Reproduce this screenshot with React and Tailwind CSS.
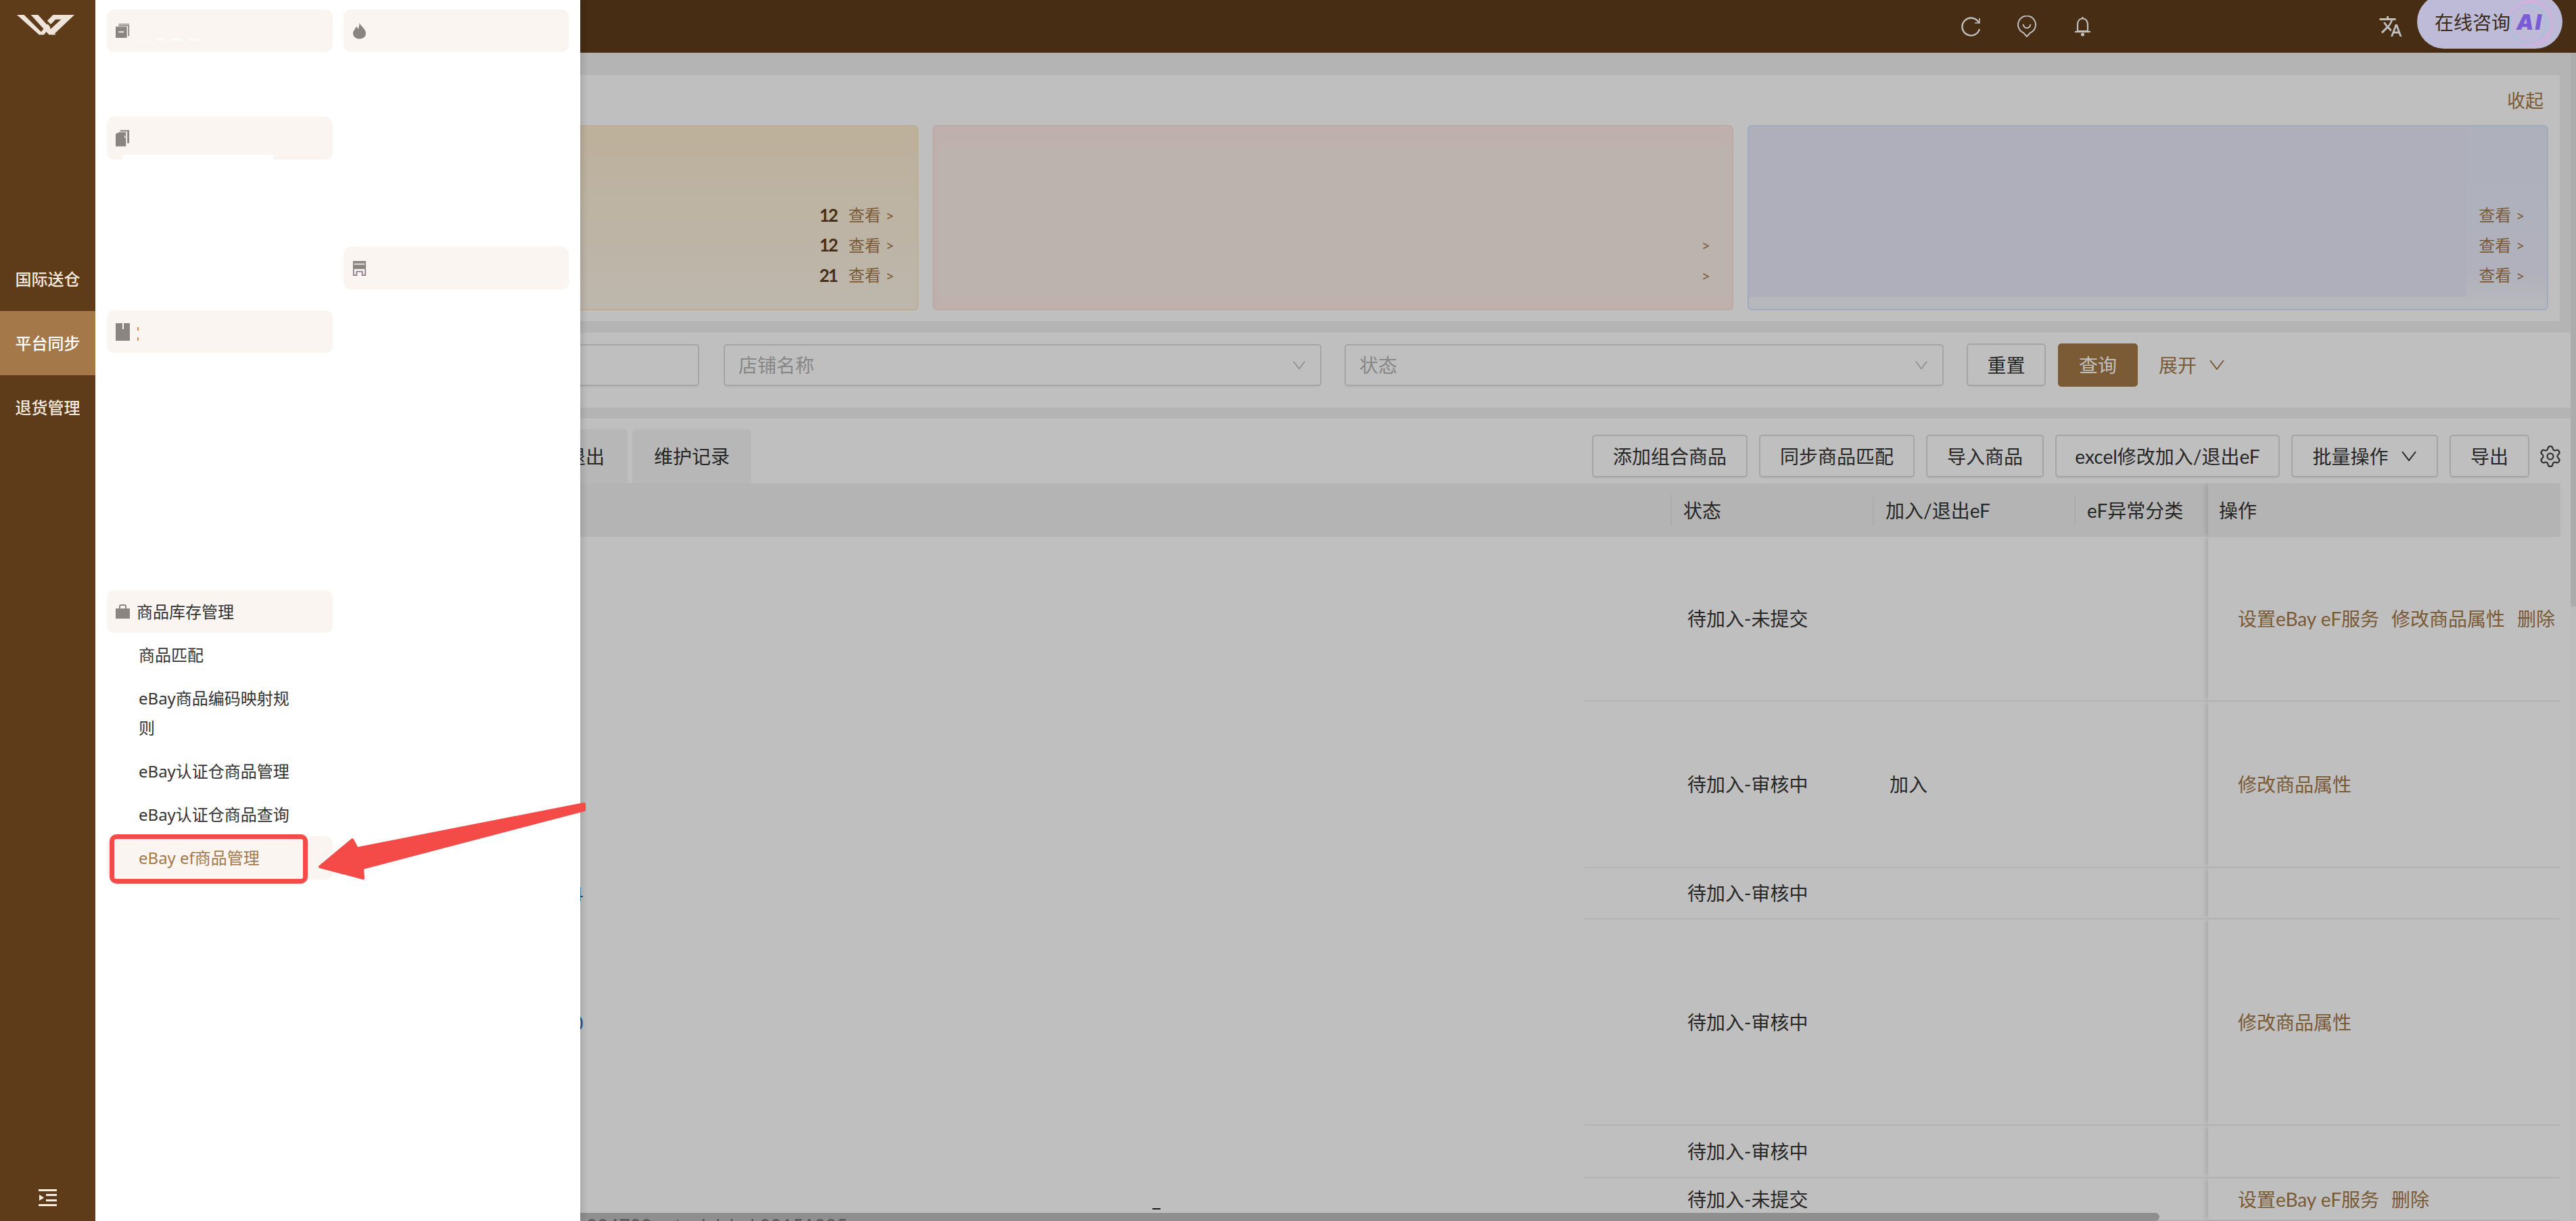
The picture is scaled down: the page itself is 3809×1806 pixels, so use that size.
import React from "react";
import { MdTranslate } from "react-icons/md";
import { Settings } from "lucide-react";

const Chevron = ({ className = "w-[24px] h-[15px]" }) => (
  <svg viewBox="0 0 24 15" className={className} fill="none" stroke="currentColor" strokeWidth="2">
    <path d="M2 1 L12 14 L22 1" />
  </svg>
);

const Logo = () => (
  <svg viewBox="0 0 315 150" className="w-[105px] h-[50px]" fill="#efe4da">
    <polygon points="30,30 62,30 150,118 128,118" />
    <polygon points="92,30 124,30 203,118 172,118" />
    <polygon points="128,118 166,70 178,84 150,118" />
    <path fillRule="evenodd" d="M190 30 H285 L190 120 L172 100 L226 50 H202 L180 72 L165 56 Z" />
  </svg>
);

const IconBook = () => (
  <svg viewBox="0 0 24 24" className="w-[23px] h-[23px]" fill="#8a8580">
    <path d="M0 5h19v19H0z" />
    <path d="M5 2h18v19h-2V4H5z" />
    <path d="M5 0h18v1.2H5z" />
    <rect x="5" y="13" width="9" height="2" fill="#faf5f1" />
  </svg>
);
const IconFlame = () => (
  <svg viewBox="0 0 22 25" className="w-[22px] h-[25px]" fill="#8a8580">
    <path d="M11 0c1 5 10 9 10 17a10 8 0 0 1-20 0C1 12 5 10 6 6c2 1 2 3 3 4 1-3 2-6 2-10z" />
  </svg>
);
const IconDocs = () => (
  <svg viewBox="0 0 22 25" className="w-[21px] h-[25px]" fill="#8a8580">
    <path d="M0 6l5-3h11v22H0z" />
    <path d="M7 0h14v20h-3V2H7z" />
    <path d="M13 7l3 5-2 0z" fill="#faf5f1" />
  </svg>
);
const IconStore = () => (
  <svg viewBox="0 0 23 24" className="w-[23px] h-[24px]">
    <path d="M1 0h21v13H1z" fill="#8a8580" />
    <rect x="3" y="4" width="17" height="2" fill="#efeae6" />
    <path d="M2 13v10h5v-6h9v6h5V13" fill="none" stroke="#8a7a90" strokeWidth="2" />
  </svg>
);
const IconNote = () => (
  <svg viewBox="0 0 21 26" className="w-[21px] h-[26px]">
    <path d="M0 0h21v26H0z" fill="#8a8580" />
    <rect x="10" y="0" width="2" height="9" fill="#faf5f1" />
  </svg>
);
const IconBag = () => (
  <svg viewBox="0 0 21 21" className="w-[21px] h-[21px]">
    <path d="M0 6h21v15H0z" fill="#8a8580" />
    <path d="M6 7V3a2 2 0 0 1 2-2h5a2 2 0 0 1 2 2v4" fill="none" stroke="#8a8580" strokeWidth="2" />
  </svg>
);

const MenuCard = ({ icon, text, children, className = "" }) => (
  <div className={`relative flex h-[63px] items-center gap-[10px] rounded-[10px] bg-[#faf5f1] pl-[13px] text-[24px] text-[#333333] ${className}`}>
    <span className="flex w-[21px] justify-center">{icon}</span>
    {text && <span>{text}</span>}
    {children}
  </div>
);

const SubItem = ({ children }) => (
  <div className="py-[10px] pl-[47px] pr-[48px] text-[24px] leading-[44px] text-[#333333]">{children}</div>
);

const SideItem = ({ children, active }) => (
  <div className={`flex h-[95px] items-center justify-center text-[24px] font-medium ${active ? "bg-[#a47848] text-white" : "text-[#f2e9df]"}`}>
    {children}
  </div>
);

const StatLine = ({ count, link = true }) => (
  <div className="flex h-[44.5px] items-center justify-end">
    {count && <span className="mr-[17px] text-[26px] font-bold tracking-[-2px] text-[#5e3c1a]">{count}</span>}
    {link && <span className="text-[24px] text-[#a47848]">查看</span>}
    <span className="ml-[7px] text-[22px] text-[#a47848]">&gt;</span>
  </div>
);

const Placeholder = ({ children, chevron, className }) => (
  <div className={`flex h-[62px] items-center justify-between rounded-[5px] border-2 border-[#dcdcdc] pl-[20px] pr-[21px] text-[28px] text-[#b5b5b5] shadow-[0_2px_0_rgba(0,0,0,0.03)] ${className}`}>
    <span>{children}</span>
    {chevron && <Chevron className="h-[14px] w-[20px] text-[#bdbdbd]" />}
  </div>
);

const ToolButton = ({ children, className }) => (
  <div className={`flex h-[63px] items-center justify-center gap-[18px] rounded-[5px] border-2 border-[#dcdcdc] bg-white text-[28px] text-[#333333] shadow-[0_2px_0_rgba(0,0,0,0.04)] ${className}`}>
    {children}
  </div>
);

const HeadCell = ({ children, className }) => (
  <div className={`flex h-full items-center ${className}`}>
    <span className="mr-[17px] h-[45px] w-[2px] bg-[#e6e6e6]" />
    <span>{children}</span>
  </div>
);

const rows = [
  { h: "h-[244px]", status: "待加入-未提交", ops: ["设置eBay eF服务", "修改商品属性", "删除"] },
  { h: "h-[246px]", status: "待加入-审核中", join: "加入", ops: ["修改商品属性"] },
  { h: "h-[76px]", status: "待加入-审核中", ops: [], frag: "4", fragColor: "text-[#1b5e8e]" },
  { h: "h-[305px]", status: "待加入-审核中", ops: ["修改商品属性"], frag: "0", fragColor: "text-[#1677c4]" },
  { h: "h-[78px]", status: "待加入-审核中", ops: [] },
  { h: "h-[63px]", status: "待加入-未提交", ops: ["设置eBay eF服务", "删除"] },
];

export default function App() {
  return (
    <div className="relative flex h-[1806px] w-[3809px] overflow-hidden bg-[#f1f1f1] font-['Noto_Sans','Noto_Sans_CJK_SC',sans-serif]">
      {/* left rail */}
      <aside className="relative z-30 flex w-[141px] shrink-0 flex-col bg-[#5e3c1a]">
        <div className="h-[365px] pl-[15px] pt-[12px]">
          <Logo />
        </div>
        <SideItem>国际送仓</SideItem>
        <SideItem active>平台同步</SideItem>
        <SideItem>退货管理</SideItem>
        <div className="mt-auto flex justify-center pb-[21px]">
          <svg viewBox="0 0 27 27" className="h-[27px] w-[27px]" fill="#f7efe6">
            <rect x="0" y="1" width="27" height="3" />
            <rect x="11" y="8" width="16" height="3" />
            <rect x="11" y="16" width="16" height="3" />
            <rect x="0" y="23" width="27" height="3" />
            <path d="M1 9l7 4.5L1 18z" />
          </svg>
        </div>
      </aside>

      {/* page */}
      <div className="flex min-w-0 flex-1 flex-col font-['Lato','Noto_Sans_CJK_SC',sans-serif]">
        <header className="flex h-[78px] shrink-0 items-center overflow-hidden bg-[#5e3c1a] pl-[2759px] text-white">
          <svg viewBox="0 0 29 29" className="h-[29px] w-[29px]" fill="none" stroke="currentColor" strokeWidth="2.4">
            <path d="M26 8.5A13 13 0 1 0 27 18" />
            <path d="M27 2v7h-7" strokeWidth="1.6" />
          </svg>
          <svg viewBox="0 0 28 32" className="ml-[54px] h-[32px] w-[28px]" fill="none" stroke="currentColor" strokeWidth="2">
            <path d="M14 31l-5-5.5A13 13 0 1 1 19 25.500z" />
            <path d="M8.500 13c1 4 3 5.500 5.500 5.500s4.500-1.500 5.500-5.500" />
          </svg>
          <svg viewBox="0 0 25 30" className="ml-[56px] h-[30px] w-[25px]" fill="none" stroke="currentColor" strokeWidth="2.2">
            <path d="M12.500 3.500c-5 0-7.500 4-7.500 9v9.500H20V12.500c0-5-2.500-9-7.500-9z" />
            <path d="M1 23h23" />
            <path d="M12.500 1v2.500" />
            <circle cx="12.500" cy="27" r="1.500" fill="currentColor" />
          </svg>
          <MdTranslate className="ml-[425px] h-[36px] w-[36px]" />
          <div className="relative z-[15] ml-[21px] mt-[-14px] flex h-[80px] w-[215px] shrink-0 items-center overflow-hidden rounded-full bg-[#bdbbd8] pl-[26px] pt-[1px] text-[28px] text-[#3a2b1c]">
            <svg viewBox="0 0 80 80" className="absolute left-[130px] top-[4px] h-[76px] w-[76px]" fill="none">
              <circle cx="40" cy="40" r="34" stroke="#d8aee0" strokeWidth="3" />
              <circle cx="36" cy="42" r="29" stroke="#a8c0dc" strokeWidth="2.500" />
              <circle cx="44" cy="38" r="30" stroke="#ccb2dc" strokeWidth="2" />
            </svg>
            <span className="relative">在线咨询</span>
            <span className="relative ml-[9px] font-['Inter',sans-serif] text-[32px] font-black italic tracking-[2px] text-[#7a5cd6]">AI</span>
          </div>
        </header>

        <div className="flex min-h-0 flex-1">
          <main className="flex min-w-0 flex-1 flex-col pt-[33px]">
            {/* summary */}
            <section className="ml-[15px] mr-[16px] h-[364px] shrink-0 rounded-[4px] bg-white px-[17px] pb-[16px]">
              <div className="flex h-[74px] items-center justify-end pr-[7px] pt-[3px] text-[27px] text-[#a47848]">收起</div>
              <div className="flex h-[274px] gap-[21px]">
                <div className="flex-1 rounded-[6px] border-2 border-[#fce8c2] bg-linear-to-b from-[#fcecd0] to-[#fcf4e6] pr-[34px] pt-[109px]">
                  <StatLine count="12" />
                  <StatLine count="12" />
                  <StatLine count="21" />
                </div>
                <div className="relative flex-1 overflow-hidden rounded-[6px] border-2 border-[#fbe3df] bg-[#fcebe7] pr-[32px] pt-[109px]">
                  <div className="absolute left-[6px] top-[28px] h-[226px] w-[1170px] bg-[#fbeee9]" />
                  <div className="relative">
                    <div className="h-[44.5px]" />
                    <StatLine link={false} />
                    <StatLine link={false} />
                  </div>
                </div>
                <div className="relative flex-1 overflow-hidden rounded-[6px] border-2 border-[#d8e4fb] bg-linear-to-b from-[#e8ebfb] via-[#ebedfb] via-80% to-[#f6f7fc] pr-[33px] pt-[109px]">
                  <div className="absolute left-0 top-0 h-[252px] w-[1061px] bg-[#e8eafa]" />
                  <div className="relative">
                    <StatLine />
                    <StatLine />
                    <StatLine />
                  </div>
                </div>
              </div>
            </section>

            {/* filters */}
            <section className="ml-[15px] mt-[17px] flex h-[111px] shrink-0 items-center bg-white pb-[16px] pl-[14px]">
              <Placeholder className="w-[864px]" />
              <Placeholder className="ml-[36px] w-[884px]" chevron>店铺名称</Placeholder>
              <Placeholder className="ml-[34px] w-[886px]" chevron>状态</Placeholder>
              <ToolButton className="ml-[34px] w-[117px]">重置</ToolButton>
              <div className="ml-[18px] flex h-[64px] w-[118px] items-center justify-center rounded-[5px] bg-[#a47848] text-[28px] text-white">查询</div>
              <div className="ml-[31px] flex items-center gap-[18px] text-[28px] text-[#a47848]">
                <span>展开</span>
                <Chevron />
              </div>
            </section>

            {/* table */}
            <section className="relative ml-[15px] mt-[16px] flex min-h-0 flex-1 flex-col overflow-hidden bg-white">
              <div className="flex h-[96px] shrink-0 items-end justify-between pr-[12px]">
                <div className="ml-[537px] flex gap-[7px]">
                  <div className="flex h-[80px] w-[235px] items-center justify-end rounded-t-[5px] bg-[#f5f5f5] pr-[34px] text-[28px] text-[#333333]">加入/退出</div>
                  <div className="flex h-[80px] w-[176px] items-center justify-center rounded-t-[5px] bg-[#f5f5f5] text-[28px] text-[#333333]">维护记录</div>
                </div>
                <div className="flex items-center gap-[13px] pb-[9px]">
                  <ToolButton className="mr-[4px] w-[230px]">添加组合商品</ToolButton>
                  <ToolButton className="mr-[4px] w-[230px]">同步商品匹配</ToolButton>
                  <ToolButton className="mr-[4px] w-[174px]">导入商品</ToolButton>
                  <ToolButton className="mr-[4px] w-[332px]">excel修改加入/退出eF</ToolButton>
                  <ToolButton className="mr-[4px] w-[217px]">批量操作<Chevron /></ToolButton>
                  <ToolButton className="w-[118px]">导出</ToolButton>
                  <Settings className="h-[36px] w-[36px] text-[#444444]" strokeWidth={1.5} />
                </div>
              </div>

              <div className="mr-[15px] flex h-[79px] shrink-0 items-center bg-[#f1f1f1] text-[28px] text-[#333333]">
                <div className="w-[2314px]" />
                <HeadCell className="w-[299px]">状态</HeadCell>
                <HeadCell className="w-[298px]">加入/退出eF</HeadCell>
                <HeadCell className="w-[198px]">eF异常分类</HeadCell>
                <div className="flex h-full flex-1 items-center pl-[16px] shadow-[-6px_0_6px_-2px_rgba(0,0,0,0.1)]">操作</div>
              </div>

              {rows.map((row, i) => (
                <div key={i} className={`mr-[15px] flex shrink-0 overflow-hidden text-[28px] text-[#333333] ${row.h}`}>
                  <div className="flex w-[2187px] items-center">
                    {row.frag && <span className={`ml-[690px] ${row.fragColor}`}>{row.frag}</span>}
                  </div>
                  <div className="flex flex-1 items-center border-b-2 border-[#f0f0f0]">
                    <div className="w-[127px]" />
                    <div className="w-[299px] pl-[25px]">{row.status}</div>
                    <div className="w-[298px] pl-[25px]">{row.join}</div>
                    <div className="w-[198px]" />
                    <div className="flex h-full flex-1 items-center gap-[18px] pl-[44px] text-[#a47848] shadow-[-6px_0_6px_-2px_rgba(0,0,0,0.1)]">
                      {row.ops.map((op) => (
                        <span key={op} className="whitespace-nowrap">{op}</span>
                      ))}
                    </div>
                  </div>
                </div>
              ))}

              <div className="absolute bottom-0 left-0 h-[12px] w-[3037px] rounded-full bg-[#bfbfbf]" />
              <div className="absolute bottom-0 left-0 h-[5px] w-[1097px] overflow-hidden text-right text-[28px] leading-[28px] text-[#777777]">
                <div className="-mt-[2px] whitespace-nowrap">004700 &nbsp; stock label 00151035</div>
              </div>
              <div className="absolute left-[1548px] top-[1168px] h-[2px] w-[12px] bg-[#222222]" />
            </section>
          </main>

          {/* page scrollbar */}
          <div className="w-[8px] shrink-0 bg-[#fbfbfb]">
            <div className="h-[819px] bg-[#e6e6e6]" />
          </div>
        </div>
      </div>

      {/* dimming layer */}
      <div className="absolute inset-y-0 left-[141px] right-0 z-10 bg-black/25" />

      {/* fly-out menu */}
      <nav className="absolute inset-y-0 left-[141px] z-20 flex w-[717px] gap-[16px] bg-white px-[17px] pt-[14px] shadow-[4px_0_8px_rgba(0,0,0,0.12)]">
        <div className="w-[334px]">
          <MenuCard icon={<IconBook />}>
            <div className="absolute left-[45px] top-[44px] flex gap-[10px]">
              <span className="h-[2px] w-[4px] bg-white" />
              <span className="h-[2px] w-[4px] bg-white" />
              <span className="h-[2px] w-[12px] bg-white" />
              <span className="h-[2px] w-[16px] bg-white" />
              <span className="h-[2px] w-[16px] bg-white" />
            </div>
          </MenuCard>
          <MenuCard icon={<IconDocs />} className="mt-[96px]">
            <div className="absolute bottom-0 left-[23px] h-[7px] w-[223px] bg-white" />
          </MenuCard>
          <MenuCard icon={<IconNote />} className="mt-[223px]">
            <div className="absolute left-[45px] top-[25px] flex h-[20px] flex-col justify-between">
              <span className="h-[5px] w-[2px] bg-[#e08a40]" />
              <span className="h-[5px] w-[2px] bg-[#e08a40]" />
            </div>
          </MenuCard>
          <MenuCard icon={<IconBag />} text="商品库存管理" className="mt-[351px]" />
          <div className="mt-[1px]">
            <SubItem>商品匹配</SubItem>
            <SubItem>eBay商品编码映射规则</SubItem>
            <SubItem>eBay认证仓商品管理</SubItem>
            <SubItem>eBay认证仓商品查询</SubItem>
            <div className="relative rounded-[10px] bg-[#faf5f1] py-[10px] pl-[47px] text-[24px] leading-[44px] text-[#a47848]">
              eBay ef商品管理
              <div className="absolute left-[4px] top-[-3px] h-[73px] w-[293px] rounded-[10px] border-[7px] border-[#f44b48]" />
            </div>
          </div>
        </div>
        <div className="w-[334px]">
          <MenuCard icon={<IconFlame />} />
          <MenuCard icon={<IconStore />} className="mt-[288px]" />
        </div>
      </nav>

      {/* annotation arrow */}
      <svg className="pointer-events-none absolute left-0 top-0 z-40 h-[1806px] w-[3809px]" viewBox="0 0 3809 1806">
        <polygon
          points="473,1282 521,1242 528,1255 864,1189 864,1198 536,1284 537,1299"
          fill="#f44b48"
          stroke="#f44b48"
          strokeWidth="4"
          strokeLinejoin="round"
        />
      </svg>
    </div>
  );
}
